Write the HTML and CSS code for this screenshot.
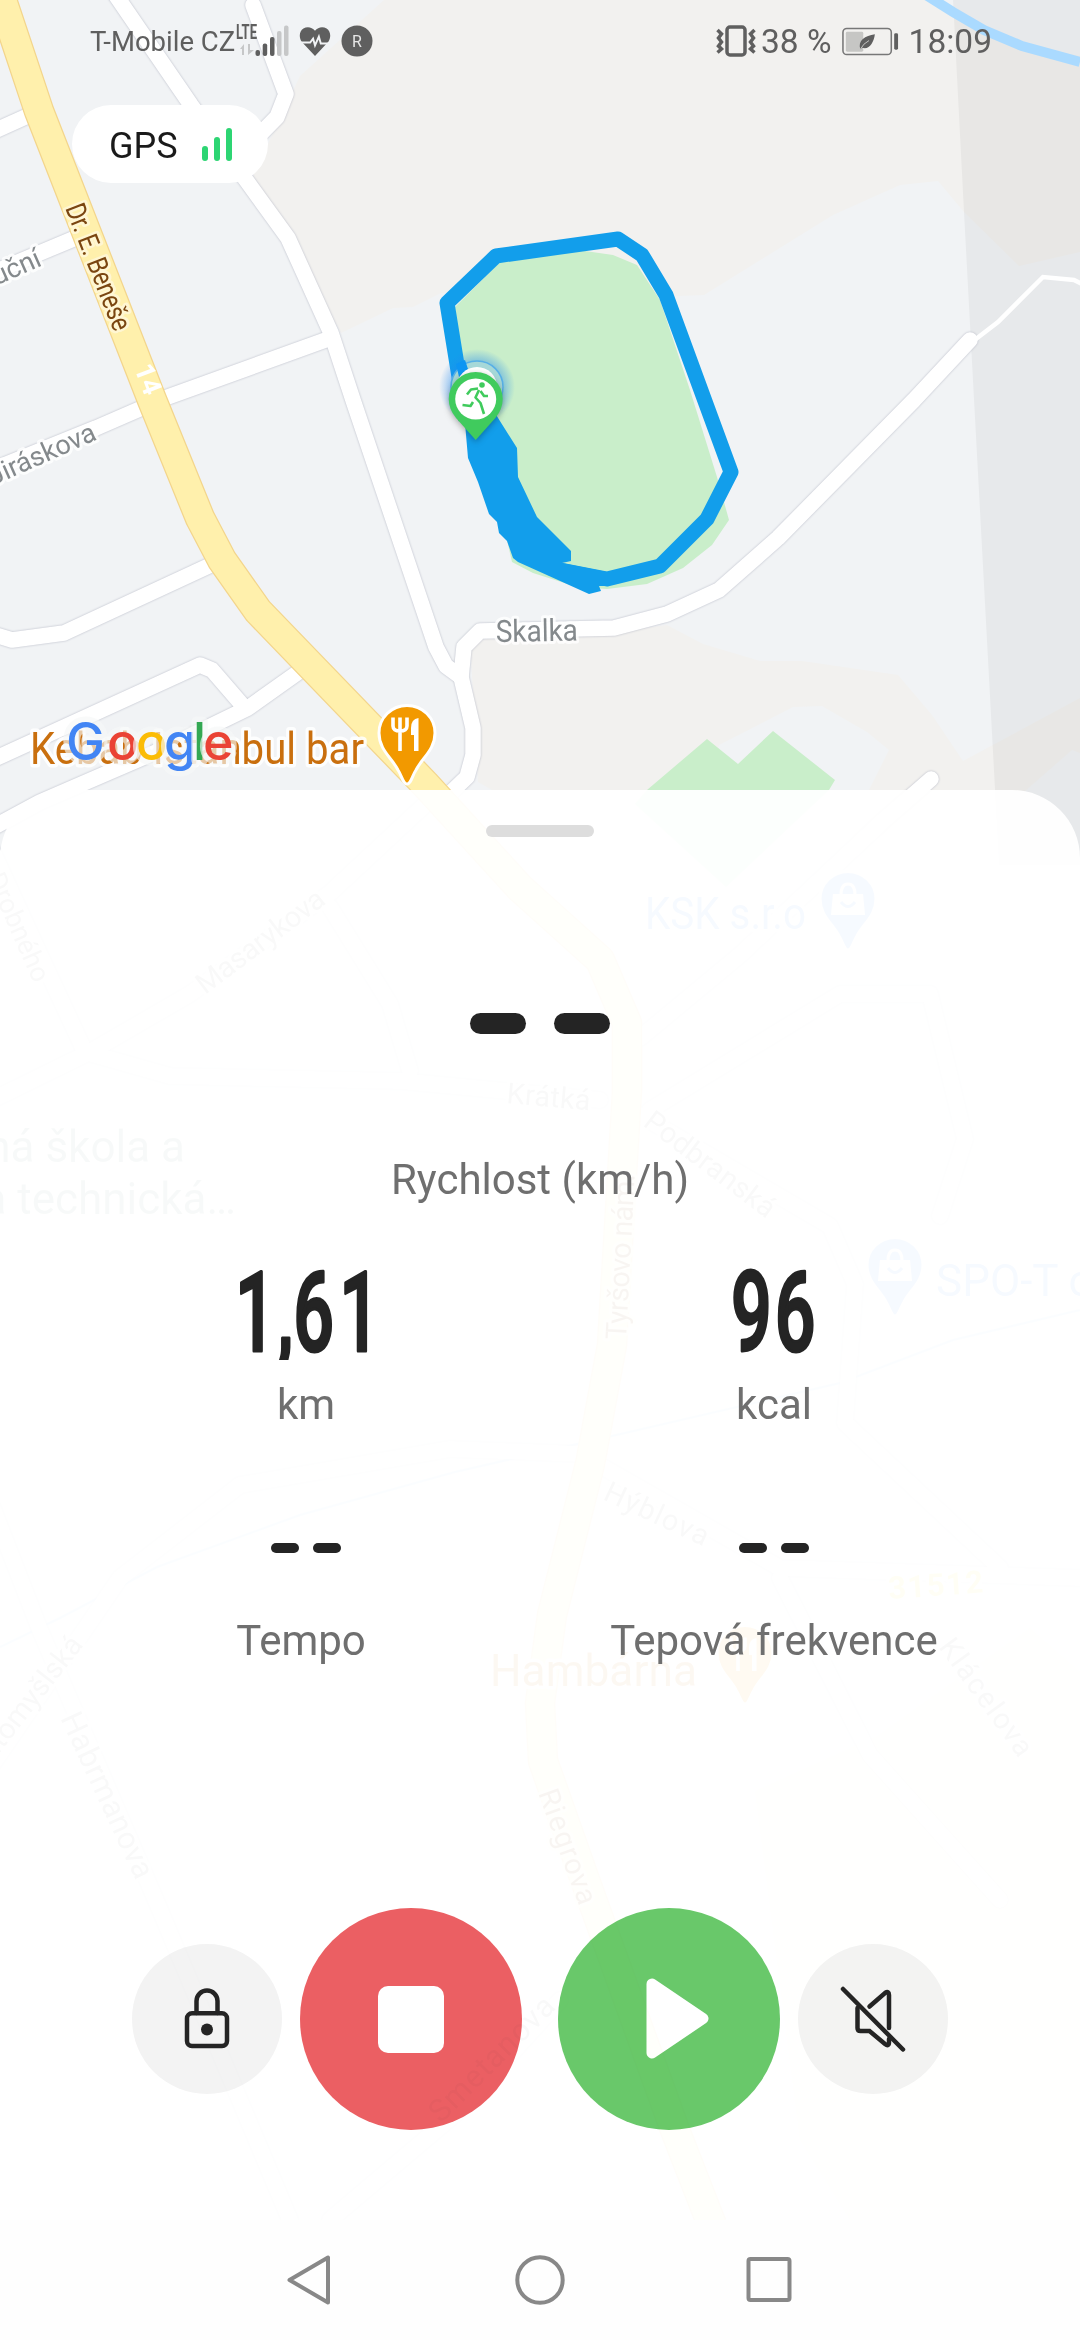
FILE: index.html
```
<!DOCTYPE html>
<html lang="cs">
<head>
    <meta charset="UTF-8">
    <title>Trénink</title>
    <link rel="stylesheet" href="styles.css">
</head>
<body>
<div id="phone">
    <svg id="map" viewBox="0 0 1080 2220">
        <defs>
            <radialGradient id="glow">
                <stop offset="0.6" stop-color="#1e88f0" stop-opacity="0.5"/>
                <stop offset="1" stop-color="#1e88f0" stop-opacity="0"/>
            </radialGradient>
            <path id="pin" d="M0,51 C-4,51 -5,43 -9,37 C-15,25 -28,17 -28,0 A28,27.500 0 0 1 28,0 C28,17 15,25 9,37 C5,43 4,51 0,51 Z"/>
            <g id="fork">
                <path d="M-14,-15.500 V-7 Q-14,-2 -7,-2 Q0,-2 0,-7 V-15.500 M-7,-15.500 V18" fill="none" stroke="#fff" stroke-width="3.600"/>
                <path d="M11.500,-15 Q4,-14 4,-5 V2 H7 V18 H11.500 Z" fill="#fff"/>
            </g>
            <g id="bag">
                <path d="M-15,-5 H15 L17,16 H-17 Z" fill="#fff"/>
                <path d="M-7,-4 Q-7,-15 0,-15 Q7,-15 7,-4" fill="none" stroke="#fff" stroke-width="3"/>
                <path d="M-7,3 Q0,12 7,3" fill="none" stroke="#5b9bf8" stroke-width="3"/>
            </g>
        </defs>

        <!-- areas -->
        <path class="land" d="M384,0 L300,76 L253,176 L341,333 L393,308 L413,307 L441,293 L678,296 L704,295 L833,215 L900,185 L938,181 L964,212 L1019,266 L1080,252 V56 L1022,46 L984,26 L941,0 Z"/>
        <path class="land" d="M470,640 L614,632 L667,625 L703,644 L760,661 L802,661 L898,675 L932,715 L963,761 L1080,698 V753 L1072,750 L1024,792 L980,836 H560 L492,790 L478,782 Z"/>
        <path class="ground" d="M719,745 L793,707 L822,706 L867,732 L889,750 L869,790 L840,836 L700,836 Z"/>
        <path class="park" d="M635,804 L647,790 L707,739 L738,764 L773,731 L835,780 L829,790 L726,887 Z"/>
        <path class="park" d="M500,262 L540,252 L585,251 L613,255 L637,265 L660,300 L690,390 L717,477 L729,520 L712,545 L683,568 L647,584 L607,589 L577,587 L533,573 L512,562 L507,540 L468,443 L455,307 Z"/>
        <path class="town" d="M755,1791 L877,1736 L960,1677 L1030,1628 L1080,1672 V2220 H850 L800,2140 Z"/>
        <path class="shade" d="M953,0 L964,213 L974,400 L995,790 L999,865 H1080 V0 Z"/>
        <path class="river" d="M926,-5 L953,12 L984,30 L1022,46 L1080,62"/>
        <path class="brook" d="M0,1647 L60,1618 L157,1567 L300,1515 L455,1472 L612,1436 L840,1383 L953,1340 L1080,1310"/>

        <!-- streets -->
        <g id="streets">
            <path d="M115,-6 L191,105 L246,180 L288,238 L331,333 L353,400 L436,647 L446,666 L461,677"/>
            <path d="M253,5 L286,94 L277,117 L240,155"/>
            <path d="M-8,132 L32,114"/>
            <path d="M-8,273 L78,237"/>
            <path d="M331,338 L165,398 L96,428 L-8,470"/>
            <path d="M215,563 L64,633 L12,640 L-8,634"/>
            <path d="M300,671 L248,708 L172,745 L40,802 L-8,828"/>
            <path d="M244,707 L212,670 L200,665 L-8,760"/>
            <path d="M444,799 L467,777 L473,755 L473,728 L461,677 L464,647 L480,631 L614,628 L667,614 L719,590 L778,538 L850,465 L914,400 L970,340"/>
            <path d="M931,779 L884,820 L740,955 L640,1038"/>
            <path d="M430,800 L330,893 L190,994 L90,1052 L-8,1100"/>
            <path d="M-8,850 L40,955 L85,1052 L170,1076 L400,1081 L600,1100"/>
            <path d="M330,907 L390,1004 L410,1071"/>
            <path d="M650,1110 L840,994 L930,994 L965,1139 L940,1216"/>
            <path d="M640,1115 L830,1226 L855,1284 L845,1423 L1000,1568"/>
            <path d="M-8,1506 L40,1630 L160,1910 L290,2220"/>
            <path d="M-8,1765 L120,1578 L240,1485 L450,1449 L580,1454 L780,1568 L1080,1578"/>
            <path d="M780,1578 L870,1755 L1000,1900"/>
            <path d="M330,2220 L460,2110 L560,2000"/>
        </g>
        <path class="path" d="M972,342 L998,322 L1043,277 L1074,280 L1084,285"/>
        <g id="main">
            <path class="edge" d="M-2,-12 L39,111 L152,400 L200,518 L222,560 L258,611 L425,784 L520,888 L600,960 L627,1023 L627,1091 L612,1345 L590,1464 L552,1615 L540,1703 L543,1761 L585,1880 L675,2130 L712,2225"/>
            <path class="fill" d="M-2,-12 L39,111 L152,400 L200,518 L222,560 L258,611 L425,784 L520,888 L600,960 L627,1023 L627,1091 L612,1345 L590,1464 L552,1615 L540,1703 L543,1761 L585,1880 L675,2130 L712,2225"/>
        </g>

        <!-- street names -->
        <g id="names">
            <text class="brown" transform="translate(65,208) rotate(68.500)" textLength="134" lengthAdjust="spacingAndGlyphs" font-size="28">Dr. E. Beneše</text>
            <text class="number" transform="translate(134,368) rotate(69)" font-size="27">14</text>
            <text transform="translate(43,265) rotate(-24)" text-anchor="end" font-size="27">Luční</text>
            <text transform="translate(98,439) rotate(-24)" text-anchor="end" font-size="27">Jiráskova</text>
            <text transform="translate(496,642) rotate(-1)" textLength="82" font-size="30.500" lengthAdjust="spacingAndGlyphs">Skalka</text>
            <text transform="translate(34,984) rotate(66)" text-anchor="end" font-size="27">Drobného</text>
            <text transform="translate(205,995) rotate(-37)" textLength="153" font-size="29">Masarykova</text>
            <text transform="translate(506,1103) rotate(5)" textLength="84" font-size="29">Krátká</text>
            <text transform="translate(642,1125) rotate(37)" textLength="156" font-size="29">Podbranská</text>
            <text class="brown" transform="translate(626,1340) rotate(-87)" textLength="166" font-size="29">Tyršovo nám.</text>
            <text transform="translate(602,1499) rotate(25)" textLength="112" font-size="29">Hýblova</text>
            <text transform="translate(938,1647) rotate(54)" textLength="138" font-size="29">Klácelova</text>
            <text class="brown" transform="translate(538,1793) rotate(70)" textLength="121" font-size="29">Riegrova</text>
            <text transform="translate(84,1645) rotate(-52)" text-anchor="end" font-size="29">Litomyšlská</text>
            <text transform="translate(60,1718) rotate(65)" textLength="180" font-size="31">Habrmanova</text>
            <text transform="translate(441,2124) rotate(-45)" textLength="164" font-size="31">Smetanova</text>
            <text class="gold" transform="translate(889,1599) rotate(-4)" textLength="95" font-size="31">31512</text>
        </g>

        <!-- places -->
        <g id="places">
            <text class="school" x="185" y="1162" text-anchor="end">Odborná škola a</text>
            <text class="school" x="236" y="1214" text-anchor="end">a technická…</text>
            <text class="shop" x="645" y="929" textLength="161" lengthAdjust="spacingAndGlyphs">KSK s.r.o</text>
            <text class="shop" x="936" y="1296">SPO-T obchod</text>
            <text class="food" x="490" y="1686" textLength="207" lengthAdjust="spacingAndGlyphs">Hambárna</text>
            <text class="food" x="30" y="764" textLength="334" lengthAdjust="spacingAndGlyphs">Kebab Istanbul bar</text>
            <g transform="translate(407,733)"><use href="#pin" class="pin-food"/><use href="#fork"/></g>
            <g transform="translate(745,1653)"><use href="#pin" class="pin-food"/><use href="#fork"/></g>
            <g transform="translate(848,899)"><use href="#pin" class="pin-shop"/><use href="#bag"/></g>
            <g transform="translate(895,1265)"><use href="#pin" class="pin-shop"/><use href="#bag"/></g>
        </g>

        <!-- recorded track -->
        <path class="track" d="M466,420 L447,303 L496,256 L618,239 L642,255 L666,295 L731,472 L707,519 L660,566 L607,579 L550,568"/>
        <path class="track-fill" d="M463,400 L468,458 L478,482 L489,514 L497,522 L499,533 L507,541 L513,558 L518,562 L589,594 L601,591 L599,586 L607,586 L607,572 L562,563 L571,561 L571,551 L537,517 L518,477 L517,448 L488,402 Z"/>
        <circle cx="477" cy="387" r="38" fill="url(#glow)"/>
        <circle cx="477" cy="387" r="26" fill="#a6d8d8" stroke="#58b0e6" stroke-width="1.500"/>
        <path d="M459,377 L456,364 L465,360 L468,369 Z" fill="#0d95f2"/>
        <circle cx="477" cy="387" r="20" fill="#fff"/>
        <path class="runner-pin" d="M475.700,440 L456,418 Q448.700,409 448.700,399 A27,27 0 0 1 502.700,399 Q502.700,409 495.400,418 Z"/>
        <circle cx="475.700" cy="399" r="20.500" fill="#fff"/>
        <g id="runner">
            <circle cx="482" cy="385" r="2.800"/>
            <path d="M467,394.500 L471,389.500 L478,388.500 M480.500,391 L484,396 L488,396"/>
            <path d="M473,402 L470.500,406 L462.500,405"/>
            <path d="M479,390 L475.500,397.500 L480.500,403 L484,414" stroke-width="4"/>
        </g>

        <g id="google">
            <text x="66 107 136 164 193 203" y="760"><tspan fill="#4285f4">G</tspan><tspan fill="#ea4335">o</tspan><tspan fill="#fbbc05">o</tspan><tspan fill="#4285f4">g</tspan><tspan fill="#34a853">l</tspan><tspan fill="#ea4335">e</tspan></text>
        </g>
    </svg>

    <div id="status">
        <span class="carrier">T-Mobile CZ</span>
        <svg class="signal" width="54" height="36" viewBox="0 0 54 36">
            <text x="0" y="15.500" textLength="21" lengthAdjust="spacingAndGlyphs">LTE</text>
            <path class="light" d="M4,26 L8,21 V32 H6 V26 Z M12,21 H14 V27 H18 L12,32 Z"/>
            <g class="dark">
                <rect x="19.500" y="27" width="4.500" height="6" rx="2"/>
                <rect x="26.700" y="20.500" width="4.500" height="12.500" rx="2"/>
                <rect x="34" y="14" width="4.500" height="19" rx="2"/>
            </g>
            <g class="light">
                <rect x="41" y="8" width="4.500" height="25" rx="2"/>
                <rect x="48" y="2.500" width="4.500" height="30.500" rx="2"/>
            </g>
        </svg>
        <svg class="heart" width="32" height="29" viewBox="0 0 32 30">
            <path d="M16,30 L2,15 C-1,10 0,4 4,1.500 C8,-1 13,0 16,4 C19,0 24,-1 28,1.500 C32,4 33,10 30,15 Z"/>
            <path class="pulse" d="M0,16 H11 L14,12 L16,19 L20,10 L22,17 H32"/>
        </svg>
        <svg class="round" width="32" height="32" viewBox="0 0 32 32">
            <circle cx="16" cy="16" r="15.500"/>
            <text x="16" y="21.500" text-anchor="middle">R</text>
        </svg>
        <svg class="vibrate" width="40" height="32" viewBox="0 0 40 32">
            <rect x="11" y="2" width="18" height="28" rx="3"/>
            <path d="M1.500,5 L5.500,9 L2.500,13 L5.500,17 L2.500,21 L5.500,24 L1.500,27.500 M38.500,5 L34.500,9 L37.500,13 L34.500,17 L37.500,21 L34.500,24 L38.500,27.500"/>
        </svg>
        <span class="percent">38 %</span>
        <svg class="battery" width="59" height="29" viewBox="0 0 59 30">
            <rect x="1" y="1.500" width="50" height="27" rx="4" fill="none" stroke="#777" stroke-width="1.600"/>
            <rect x="4" y="5" width="18" height="20.500" rx="1.500" fill="#c6c6c4"/>
            <path d="M19,23 C16,14 24,9 34,7.500 C33,16 28,24 21,21.500 Z" fill="#5f5f5f"/>
            <path d="M19,23 Q22,17 28,14" fill="none" stroke="#c6c6c4" stroke-width="1"/>
            <rect x="54" y="6.500" width="4" height="17" rx="1.500" fill="#5f5f5f"/>
        </svg>
        <span class="time">18:09</span>
    </div>

    <div id="gps">
        <span>GPS</span>
        <i class="low"></i><i class="mid"></i><i class="high"></i>
    </div>

    <div id="sheet">
        <div class="handle"></div>
        <div class="dashes big"><i></i><i></i></div>
        <div class="label speed">Rychlost (km/h)</div>
        <div id="stats">
            <div class="stat">
                <svg class="value" width="160" height="96" viewBox="0 0 160 96">
                    <text transform="scale(0.640,1)" x="14 80 105 177" y="87">1,61</text>
                </svg>
                <div class="label">km</div>
            </div>
            <div class="stat">
                <svg class="value" width="160" height="96" viewBox="0 0 160 96">
                    <text transform="scale(0.640,1)" x="58 126" y="87">96</text>
                </svg>
                <div class="label">kcal</div>
            </div>
            <div class="stat">
                <div class="dashes"><i></i><i></i></div>
                <div class="label tempo">Tempo</div>
            </div>
            <div class="stat">
                <div class="dashes"><i></i><i></i></div>
                <div class="label">Tepová frekvence</div>
            </div>
        </div>
        <div id="controls">
            <div class="button lock">
                <svg width="150" height="150" viewBox="0 0 150 150">
                    <rect x="55" y="69.300" width="40" height="32.700" rx="5"/>
                    <path d="M64.500,69 V57 A10.500,10.500 0 0 1 85.500,57 V69"/>
                    <circle cx="75" cy="85.500" r="6"/>
                </svg>
            </div>
            <div class="button stop"><i></i></div>
            <div class="button play">
                <svg width="222" height="222" viewBox="0 0 222 222">
                    <path d="M94,76 L145,110.500 L94,145 Z"/>
                </svg>
            </div>
            <div class="button mute">
                <svg width="150" height="150" viewBox="0 0 150 150">
                    <path d="M45,45 L105,105.500"/>
                    <path d="M71.500,62.500 L87,49 Q91,46.500 91,51 V84"/>
                    <path d="M59.500,64 V84 Q59.500,87 62.500,87 H71.500 L87,100 Q91,103 91,98 V95"/>
                </svg>
            </div>
        </div>
    </div>

    <div id="nav">
        <svg width="50" height="50" viewBox="0 0 50 50"><path d="M4.500,25 L43,2.500 V47.500 Z"/></svg>
        <svg width="50" height="50" viewBox="0 0 50 50"><circle cx="25" cy="25" r="22.700"/></svg>
        <svg width="50" height="50" viewBox="0 0 50 50"><rect x="3.500" y="4" width="41" height="41" rx="2"/></svg>
    </div>
</div>
</body>
</html>
```
FILE: styles.css
```
* {
    padding: 0;
    margin: 0;
    box-sizing: border-box;
}

body {
    font-family: Roboto, "Noto Sans", sans-serif;
    background: #ffffff;
}

svg {
    display: block;
    flex: none;
}

#phone {
    width: 1080px;
    height: 2340px;
    position: relative;
    overflow: hidden;
    display: flex;
    flex-direction: column;
}

/* map */
#map {
    position: absolute;
    left: 0;
    top: 0;
    width: 1080px;
    height: 2220px;
    background: #f1f3f5;
}

.land { fill: #f2f1ef; }
.ground { fill: #f1f3f5; }
.park { fill: #c9eeca; }
.town { fill: #fdf8e3; }
.shade { fill: rgba(0, 0, 0, .04); }

.river, .brook {
    fill: none;
    stroke: #aadaff;
    stroke-width: 10;
}

.brook {
    stroke-width: 2;
}

#streets path {
    fill: none;
    stroke: #ffffff;
    stroke-width: 15.5;
    stroke-linecap: round;
    stroke-linejoin: round;
}

#streets {
    filter: drop-shadow(0 0 .8px #b4b7c4);
}

.path {
    fill: none;
    stroke: #ffffff;
    stroke-width: 4.5;
}

#main path {
    fill: none;
    stroke-linejoin: round;
}

#main .edge {
    stroke: #f3d58c;
    stroke-width: 30.5;
}

#main .fill {
    stroke: #fff0ac;
    stroke-width: 28;
}

#names text {
    fill: #84898c;
    stroke: #ffffff;
    stroke-width: 6;
    stroke-opacity: .8;
    stroke-linejoin: round;
    paint-order: stroke;
}

#names .brown {
    fill: #7a4510;
    stroke: #fff8dc;
}

#names .number {
    fill: #ffffff;
    stroke: none;
    font-weight: bold;
}

#names .gold {
    fill: #ffe93b;
    font-weight: bold;
}

#places text {
    font-size: 44px;
    stroke: #ffffff;
    stroke-width: 7;
    stroke-opacity: .85;
    stroke-linejoin: round;
    paint-order: stroke;
}

#places .school { fill: #6c9184; }
#places .shop { fill: #4f95f7; }
#places .food { fill: #c96f0e; }

.pin-food, .pin-shop {
    fill: #f29900;
    stroke: #ffffff;
    stroke-width: 3;
}

.pin-shop {
    fill: #5b9bf8;
}

.track {
    fill: none;
    stroke: #129eeb;
    stroke-width: 15;
    stroke-linejoin: round;
}

.track-fill {
    fill: #129eeb;
}

.runner-pin {
    fill: #40cb5d;
    filter: drop-shadow(0 2px 3px rgba(0, 0, 0, .3));
}

#runner {
    fill: #40cb5d;
}

#runner path {
    fill: none;
    stroke: #40cb5d;
    stroke-width: 2.6;
    stroke-linejoin: round;
}

#google text {
    font: 500 52px Inter, Lato, sans-serif;
    stroke: rgba(246, 247, 248, .65);
    stroke-width: 11;
    stroke-linejoin: round;
    paint-order: stroke;
}

/* status bar */
#status {
    position: relative;
    height: 82px;
    padding: 0 88px 0 90px;
    display: flex;
    align-items: center;
    color: #5f5f5f;
    white-space: nowrap;
}

.carrier {
    width: 146px;
    font-size: 27.5px;
}

.signal text {
    font-size: 20px;
    font-weight: bold;
    fill: #5f5f5f;
}

.signal .dark { fill: #5f5f5f; }
.signal .light { fill: #c6c7c8; }

.heart {
    margin-left: 9px;
    fill: #5f5f5f;
}

.heart .pulse {
    fill: none;
    stroke: #f1f3f5;
    stroke-width: 2;
}

.round {
    margin-left: 10px;
    fill: #5f5f5f;
}

.round text {
    font-size: 16px;
    fill: #e6e6e6;
}

.vibrate {
    margin-left: auto;
    margin-right: 5px;
    fill: none;
    stroke: #5f5f5f;
    stroke-width: 3.5;
}

.percent, .time {
    font-size: 33.5px;
}

.battery {
    margin: 0 9px;
}

/* gps pill */
#gps {
    position: relative;
    width: 196px;
    height: 78px;
    margin: 23px 0 0 72px;
    padding: 0 36px 22px 37px;
    border-radius: 39px;
    background: #ffffff;
    display: flex;
    align-items: flex-end;
    gap: 6px;
    font-size: 36px;
    line-height: 40px;
    color: #1a1a1a;
}

#gps span {
    margin-right: auto;
    margin-bottom: -5px;
}

#gps i {
    width: 6px;
    border-radius: 3px;
    background: #2dd573;
}

#gps .low { height: 15px; }
#gps .mid { height: 24px; }
#gps .high { height: 33px; }

/* bottom sheet */
#sheet {
    position: relative;
    height: 1430px;
    margin-top: auto;
    padding: 35px 72px 90px;
    border-radius: 68px 68px 0 0;
    background: rgba(255, 255, 255, .95);
    display: flex;
    flex-direction: column;
    align-items: center;
}

.handle {
    width: 108px;
    height: 12px;
    border-radius: 6px;
    background: #dddddd;
}

.dashes {
    display: flex;
    gap: 14px;
}

.dashes i {
    width: 28px;
    height: 10.5px;
    border-radius: 6px;
    background: #242424;
}

.big {
    margin-top: 176px;
    gap: 28px;
}

.big i {
    width: 56px;
    height: 21px;
    border-radius: 11px;
}

.label {
    font-size: 42px;
    line-height: 48px;
    color: #6f6f6f;
    white-space: nowrap;
}

.speed {
    margin-top: 122px;
}

#stats {
    width: 936px;
    margin-top: 60px;
    display: grid;
    grid-template-columns: 1fr 1fr;
    row-gap: 114px;
}

.stat {
    display: flex;
    flex-direction: column;
    align-items: center;
}

.stat .value + .label { margin-top: 20.5px; }
.stat .dashes + .label { margin-top: 64px; }

.value text {
    font-size: 112px;
    font-weight: 500;
    fill: #242424;
    stroke: #242424;
    stroke-width: 3;
    stroke-linejoin: round;
}

.tempo {
    padding-right: 10px;
}

#controls {
    margin-top: auto;
    display: flex;
    align-items: center;
    gap: 18px;
}

.button {
    width: 150px;
    height: 150px;
    border-radius: 50%;
    background: #f3f3f3;
    mix-blend-mode: multiply;
}

.lock svg, .mute svg {
    fill: none;
    stroke: #242424;
    stroke-width: 4.5;
    stroke-linecap: round;
}

.lock circle {
    fill: #242424;
    stroke: none;
}

.stop, .play {
    width: 222px;
    height: 222px;
}

.stop {
    display: flex;
    align-items: center;
    justify-content: center;
    background: #eb5f63;
}

.stop i {
    width: 66px;
    height: 67px;
    border-radius: 10px;
    background: #ffffff;
}

.play {
    margin-left: 18px;
    background: #69c86a;
}

.play path {
    fill: #ffffff;
    stroke: #ffffff;
    stroke-width: 11;
    stroke-linejoin: round;
}

/* system buttons */
#nav {
    position: relative;
    height: 120px;
    background: #fefefe;
    display: flex;
    align-items: center;
    justify-content: center;
    gap: 180px;
}

#nav svg {
    fill: none;
    stroke: #888888;
    stroke-width: 4;
    stroke-linejoin: round;
}
```
